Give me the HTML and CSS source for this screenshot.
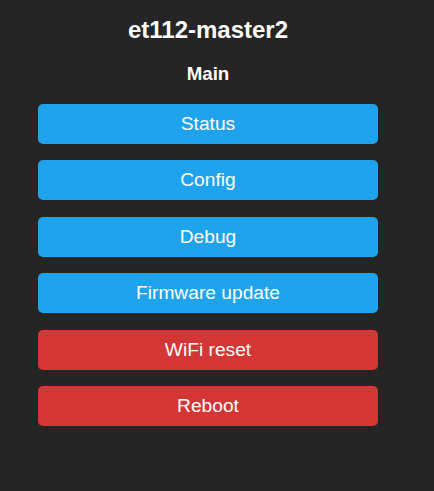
FILE: index.html
```html
<!DOCTYPE html>
<html>
<head>
<meta charset="utf-8">
<link rel="stylesheet" href="styles.css">
</head>
<body>
<div class="wrap">
  <h2 class="title">et112-master2</h2>
  <h3 class="sub">Main</h3>
  <div class="buttons">
    <button class="btn">Status</button>
    <button class="btn">Config</button>
    <button class="btn">Debug</button>
    <button class="btn">Firmware update</button>
    <button class="btn danger">WiFi reset</button>
    <button class="btn danger">Reboot</button>
  </div>
</div>
</body>
</html>
```
FILE: styles.css
```css
html, body {
  margin: 0;
  padding: 0;
  background: #252525;
}
body {
  font-family: "Liberation Sans", Arial, sans-serif;
  color: #fff;
  padding: 8px;
}
.wrap {
  width: 400px;
  display: flex;
  flex-direction: column;
  align-items: center;
}
.title {
  font-size: 24px;
  font-weight: bold;
  margin: 8px 0 0;
  line-height: 28px;
}
.sub {
  font-size: 18.72px;
  font-weight: bold;
  margin: 19px 0 0;
  line-height: 22px;
}
.buttons {
  width: 340px;
  display: flex;
  flex-direction: column;
  gap: 16.4px;
  margin-top: 19px;
}
.btn {
  border: 0;
  border-radius: 5px;
  background: #1fa3ec;
  color: #fff;
  height: 40px;
  font-family: "Liberation Sans", Arial, sans-serif;
  font-size: 19.2px;
  padding: 0;
  width: 100%;
}
.btn.danger {
  background: #d43535;
}
```
